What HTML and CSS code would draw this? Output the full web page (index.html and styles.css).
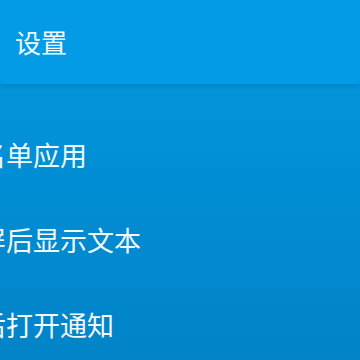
FILE: index.html
```html
<!DOCTYPE html>
<html lang="zh-CN">
  <head>
    <meta charset="UTF-8" />
    <meta name="viewport" content="width=device-width, initial-scale=1.0" />
    <title>设置</title>
    <link rel="stylesheet" href="styles.css">
  </head>
  <body>
    <div class="toolbar">
      <h1>设置</h1>
    </div>

    <!-- list is mid-swipe, so the first characters sit past the left edge -->
    <ul class="settings-list">
      <li class="setting-item">白名单应用</li>
      <li class="setting-item">亮屏后显示文本</li>
      <li class="setting-item">然后打开通知</li>
    </ul>
  </body>
</html>
```

FILE: styles.css
```css
html,
body {
  height: 100%;
}
body {
  font-family: "Noto Sans CJK SC", "Noto Sans", sans-serif;
  margin: 0;
  padding: 0;
  overflow: hidden;
  color: #f2f9fd;
  background: linear-gradient(to bottom, #0398e0 0%, #0290d6 40%, #0283c8 100%);
}
.toolbar {
  position: relative;
  z-index: 1;
  height: 84px;
  display: flex;
  align-items: center;
  padding-left: 15px;
  background-color: #039be5;
  box-shadow: 0 2px 4px rgba(0, 60, 110, 0.18);
}
.toolbar h1 {
  margin: 0;
  font-size: 26px;
  font-weight: normal;
  line-height: 1;
}
.settings-list {
  list-style: none;
  margin: 0 0 0 -48px;
  padding: 28px 0 0;
  white-space: nowrap;
}
.setting-item {
  height: 85px;
  display: flex;
  align-items: center;
  font-size: 27px;
  line-height: 1;
}
```
